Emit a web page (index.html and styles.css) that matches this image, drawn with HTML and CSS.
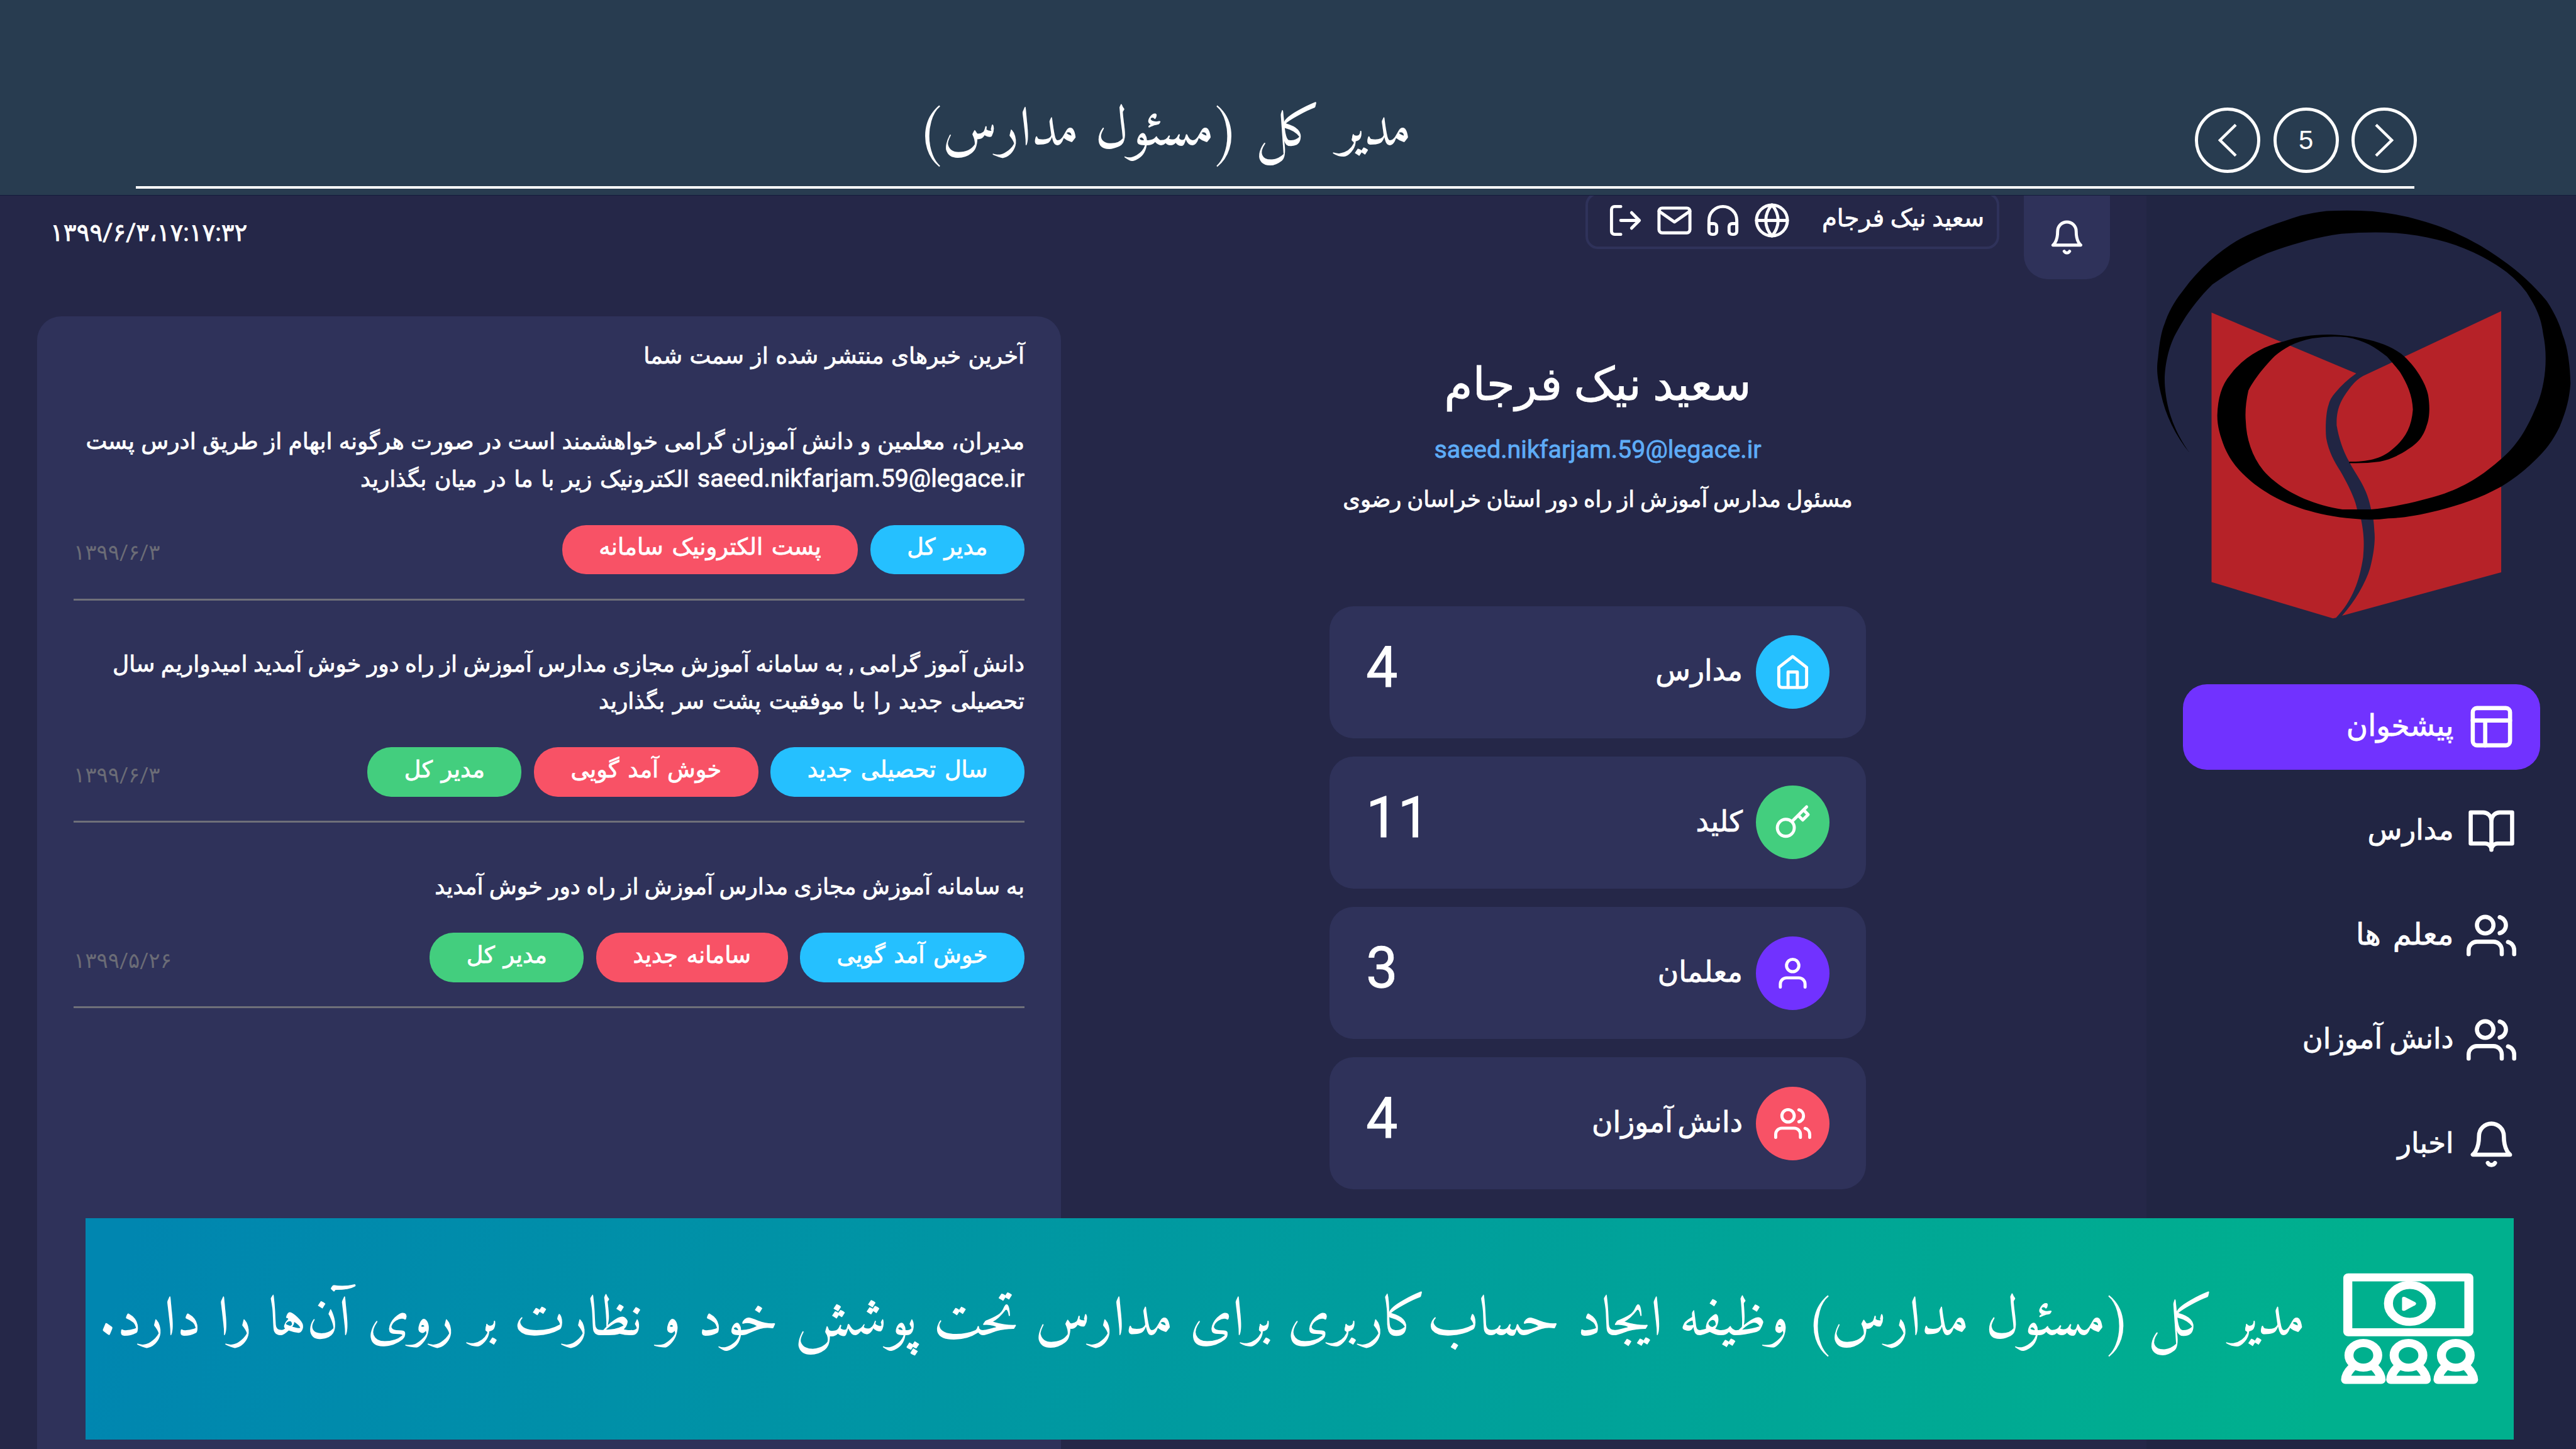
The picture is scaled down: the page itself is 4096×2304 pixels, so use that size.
FILE: index.html
```html
<!DOCTYPE html>
<html lang="fa" dir="rtl">
<head>
<meta charset="utf-8">
<title>مدیر کل (مسئول مدارس)</title>
<link rel="stylesheet" href="styles.css">
</head>
<body>
<svg class="defs" aria-hidden="true">
  <symbol id="i-layout" viewBox="0 0 24 24"><rect x="3" y="3" width="18" height="18" rx="2"/><path d="M3 9h18M9 21V9"/></symbol>
  <symbol id="i-book" viewBox="0 0 24 24"><path d="M2 3h6a4 4 0 0 1 4 4v14a3 3 0 0 0-3-3H2zM22 3h-6a4 4 0 0 0-4 4v14a3 3 0 0 1 3-3h7z"/></symbol>
  <symbol id="i-users" viewBox="0 0 24 24"><path d="M17 21v-2a4 4 0 0 0-4-4H5a4 4 0 0 0-4 4v2"/><circle cx="9" cy="7" r="4"/><path d="M23 21v-2a4 4 0 0 0-3-3.87M16 3.13a4 4 0 0 1 0 7.75"/></symbol>
  <symbol id="i-user" viewBox="0 0 24 24"><path d="M20 21v-2a4 4 0 0 0-4-4H8a4 4 0 0 0-4 4v2"/><circle cx="12" cy="7" r="4"/></symbol>
  <symbol id="i-bell" viewBox="0 0 24 24"><path d="M18 8A6 6 0 0 0 6 8c0 7-3 9-3 9h18s-3-2-3-9M13.73 21a2 2 0 0 1-3.46 0"/></symbol>
  <symbol id="i-home" viewBox="0 0 24 24"><path d="M3 9l9-7 9 7v11a2 2 0 0 1-2 2H5a2 2 0 0 1-2-2z"/><path d="M9 22V12h6v10"/></symbol>
  <symbol id="i-key" viewBox="0 0 24 24"><path d="M21 2l-2 2m-7.61 7.61a5.5 5.5 0 1 1-7.778 7.778 5.5 5.5 0 0 1 7.777-7.777zm0 0L15.5 7.5m0 0l3 3L22 7l-3-3m-3.5 3.5L19 4"/></symbol>
  <symbol id="i-globe" viewBox="0 0 24 24"><circle cx="12" cy="12" r="10"/><path d="M2 12h20M12 2a15.3 15.3 0 0 1 4 10 15.3 15.3 0 0 1-4 10 15.3 15.3 0 0 1-4-10 15.3 15.3 0 0 1 4-10z"/></symbol>
  <symbol id="i-headphones" viewBox="0 0 24 24"><path d="M3 18v-6a9 9 0 0 1 18 0v6"/><path d="M21 19a2 2 0 0 1-2 2h-1a2 2 0 0 1-2-2v-3a2 2 0 0 1 2-2h3zM3 19a2 2 0 0 0 2 2h1a2 2 0 0 0 2-2v-3a2 2 0 0 0-2-2H3z"/></symbol>
  <symbol id="i-mail" viewBox="0 0 24 24"><path d="M4 4h16c1.1 0 2 .9 2 2v12c0 1.1-.9 2-2 2H4c-1.1 0-2-.9-2-2V6c0-1.1.9-2 2-2z"/><path d="M22 6l-10 7L2 6"/></symbol>
  <symbol id="i-logout" viewBox="0 0 24 24"><path d="M9 21H5a2 2 0 0 1-2-2V5a2 2 0 0 1 2-2h4M16 17l5-5-5-5M21 12H9"/></symbol>
</svg>

<header class="header">
  <div class="header-inner">
    <nav class="pager" dir="ltr">
      <a class="pager-btn"><svg class="chevron" viewBox="0 0 30 52"><path d="M28 1.5L3 26l25 24.500"/></svg></a>
      <span class="pager-btn">5</span>
      <a class="pager-btn"><svg class="chevron" viewBox="0 0 30 52"><path d="M2 1.500L27 26 2 50.500"/></svg></a>
    </nav>
    <h1 class="title">مدیر کل (مسئول مدارس)</h1>
  </div>
</header>

<div class="app">
  <aside class="sidebar">
    <svg class="logo" viewBox="100 80 1460 1430" preserveAspectRatio="none">
      <path class="book" d="M300 445L803 655Q760 685 730 722Q712 742 707 763C697 790 695 850 699 880C707 925 728 962 748 993C775 1040 800 1090 806 1125L820 1160C832 1220 830 1250 827 1290C815 1370 790 1440 733 1499L722 1501L300 1376Z"/>
      <path class="book" d="M1307 440V1342L754 1492C800 1440 835 1380 851 1328C864 1280 870 1230 866 1200Q864 1150 853 1118C840 1050 805 1010 780 963C755 920 742 875 735 835C733 770 755 740 785 700Q805 676 827 664Z"/>
      <path class="swirl" d="M224 930C175 870 140 800 124 725C111 670 108 640 114 600C119 550 125 510 138 480C155 430 180 395 203 366C260 290 330 230 400 190C460 160 530 135 610 110Q650 100 700 94Q780 90 860 95C960 105 1030 125 1100 150C1190 185 1250 220 1310 263C1370 305 1420 350 1465 405C1495 450 1512 490 1520 520C1540 570 1546 630 1548 690C1544 740 1535 780 1510 840C1480 900 1450 930 1430 950C1390 990 1350 1020 1307 1046C1230 1088 1160 1110 1090 1128C1010 1148 960 1154 915 1156Q870 1162 820 1159C750 1155 690 1145 640 1130C550 1105 490 1068 450 1038C390 990 365 955 345 910C330 870 320 840 320 800C322 740 335 695 365 660C410 600 480 560 550 545C600 527 660 520 715 521Q755 522 800 529C870 542 920 558 960 588C1010 630 1045 690 1053 730C1060 770 1058 810 1048 835C1035 880 1010 900 985 916C950 940 920 952 885 960Q830 967 778 965L779 960C840 960 890 950 925 920C970 885 995 845 1000 780C998 730 980 690 955 650Q935 625 910 597C870 565 830 540 770 530Q710 525 650 534C590 545 550 570 520 595C470 645 440 690 428 715C420 750 416 790 419 820C421 880 440 940 480 990C540 1060 650 1110 755 1125H853C950 1115 1030 1095 1110 1070C1200 1037 1250 1000 1310 948C1370 895 1400 840 1435 755C1460 690 1470 600 1453 520C1445 460 1430 430 1395 375C1350 315 1290 275 1210 237C1130 200 1040 178 940 170Q850 165 750 173C670 183 600 205 530 227C450 253 370 300 303 348C250 400 210 455 180 510C150 560 133 640 138 700C145 790 175 860 224 930Z"/>
    </svg>
    <nav class="nav">
      <a class="nav-item active"><svg class="icon"><use href="#i-layout"/></svg><span>پیشخوان</span></a>
      <a class="nav-item"><svg class="icon"><use href="#i-book"/></svg><span>مدارس</span></a>
      <a class="nav-item teachers"><svg class="icon"><use href="#i-users"/></svg><span>معلم ها</span></a>
      <a class="nav-item"><svg class="icon"><use href="#i-users"/></svg><span>دانش آموزان</span></a>
      <a class="nav-item"><svg class="icon"><use href="#i-bell"/></svg><span>اخبار</span></a>
    </nav>
  </aside>

  <main class="main">
    <div class="topbar">
      <div class="alerts"><svg class="icon"><use href="#i-bell"/></svg></div>
      <div class="account">
        <span class="account-name">سعید نیک فرجام</span>
        <div class="account-tools">
          <svg class="icon"><use href="#i-globe"/></svg>
          <svg class="icon"><use href="#i-headphones"/></svg>
          <svg class="icon"><use href="#i-mail"/></svg>
          <svg class="icon"><use href="#i-logout"/></svg>
        </div>
      </div>
      <time class="clock" dir="ltr">۱۳۹۹/۶/۳،۱۷:۱۷:۳۲</time>
    </div>

    <div class="content">
      <section class="profile">
        <h2 class="name">سعید نیک فرجام</h2>
        <a class="email" dir="ltr">saeed.nikfarjam.59@legace.ir</a>
        <p class="role">مسئول مدارس آموزش از راه دور استان خراسان رضوی</p>
        <div class="stats">
          <div class="stat"><span class="badge blue"><svg class="icon"><use href="#i-home"/></svg></span><span class="label">مدارس</span><span class="count">4</span></div>
          <div class="stat"><span class="badge green"><svg class="icon"><use href="#i-key"/></svg></span><span class="label">کلید</span><span class="count">11</span></div>
          <div class="stat"><span class="badge purple"><svg class="icon"><use href="#i-user"/></svg></span><span class="label">معلمان</span><span class="count">3</span></div>
          <div class="stat"><span class="badge red"><svg class="icon"><use href="#i-users"/></svg></span><span class="label">دانش آموزان</span><span class="count">4</span></div>
        </div>
      </section>

      <section class="news">
        <h3 class="news-title">آخرین خبرهای منتشر شده از سمت شما</h3>
        <article class="post">
          <p><span class="line loose">مدیران، معلمین و دانش آموزان گرامی خواهشمند است در صورت هرگونه ابهام از طریق ادرس پست</span> <span class="line looser"><span class="latin">saeed.nikfarjam.59@legace.ir</span> الکترونیک زیر با ما در میان بگذارید</span></p>
          <div class="meta">
            <div class="tags"><span class="tag blue">مدیر کل</span><span class="tag red">پست الکترونیک سامانه</span></div>
            <time class="date" dir="ltr">۱۳۹۹/۶/۳</time>
          </div>
        </article>
        <article class="post">
          <p><span class="line">دانش آموز گرامی , به سامانه آموزش مجازی مدارس آموزش از راه دور خوش آمدید امیدواریم سال</span> <span class="line looser">تحصیلی جدید را با موفقیت پشت سر بگذارید</span></p>
          <div class="meta">
            <div class="tags"><span class="tag blue">سال تحصیلی جدید</span><span class="tag red">خوش آمد گویی</span><span class="tag green">مدیر کل</span></div>
            <time class="date" dir="ltr">۱۳۹۹/۶/۳</time>
          </div>
        </article>
        <article class="post">
          <p><span class="line">به سامانه آموزش مجازی مدارس آموزش از راه دور خوش آمدید</span></p>
          <div class="meta">
            <div class="tags"><span class="tag blue">خوش آمد گویی</span><span class="tag red">سامانه جدید</span><span class="tag green">مدیر کل</span></div>
            <time class="date" dir="ltr">۱۳۹۹/۵/۲۶</time>
          </div>
        </article>
      </section>
    </div>
  </main>
</div>

<div class="banner">
  <svg class="audience" viewBox="255 405 770 700" preserveAspectRatio="none">
    <rect x="297.500" y="436.500" width="673" height="341" rx="2"/>
    <ellipse cx="642.500" cy="598.500" rx="119" ry="114.500"/>
    <path class="solid" d="M599 565Q600 554 615 558L672 591Q683 600 672 609L615 643Q600 648 599 636Z"/>
    <g id="seat"><ellipse cx="384" cy="921" rx="80" ry="76.500"/><path d="M322 995Q286 1035 285 1073H483Q482 1035 446 995"/></g>
    <use href="#seat" x="251"/>
    <use href="#seat" x="514"/>
  </svg>
  <p class="caption">مدیر کل (مسئول مدارس) وظیفه ایجاد حساب‌کاربری برای مدارس تحت پوشش خود و نظارت بر روی آن‌ها را دارد.</p>
</div>
</body>
</html>
```
FILE: styles.css
```css
* { box-sizing: border-box; margin: 0; padding: 0; }

body {
  position: relative;
  width: 4096px;
  height: 2304px;
  overflow: hidden;
  background: #252748;
  color: #fff;
  font-family: Roboto, "DejaVu Sans", sans-serif;
  font-size: 36px;
  line-height: 58.6px;
  white-space: nowrap;
}

h1, h2, h3 { font-weight: 400; }

.defs { display: none; }

.icon {
  width: 59px;
  height: 59px;
  flex: none;
  fill: none;
  stroke: #fff;
  stroke-width: 2;
  stroke-linecap: round;
  stroke-linejoin: round;
}

/* Slide header */
.header {
  position: relative;
  z-index: 1;
  height: 311px;
  padding: 0 257px 0 216px;
  background: #283c50;
  border-bottom: 1px solid #141c3c;
}

.header-inner {
  display: flex;
  height: 299.5px;
  border-bottom: 4.5px solid #fff;
}

.pager {
  display: flex;
  gap: 20.3px;
  margin: 170.5px -4px 0 0;
}

.pager-btn {
  display: flex;
  align-items: center;
  justify-content: center;
  width: 104px;
  height: 104px;
  border: 5px solid #fff;
  border-radius: 50%;
  font: 42px "Liberation Sans", Arial, sans-serif;
}

.chevron {
  width: 30px;
  height: 52px;
  fill: none;
  stroke: #fff;
  stroke-width: 4.5;
}

.title {
  flex: 1;
  padding: 135px 4px 0 0;
  text-align: center;
  font: 88px/150px Amiri, "Noto Naskh Arabic", "DejaVu Sans", serif;
}

/* Application shell */
.app {
  display: flex;
  height: 1993px;
  -webkit-text-stroke: 0.8px currentColor;
}

.sidebar {
  width: 683px;
  padding-top: 17.6px;
  background: #212543;
}

.logo {
  display: block;
  width: 667.8px;
  height: 658.3px;
  margin-right: 3.7px;
}

.book { fill: #b62228; }
.swirl { fill: #000; }

.nav {
  display: flex;
  flex-direction: column;
  gap: 30px;
  margin: 101px 57px 0 58px;
}

.nav-item {
  display: flex;
  align-items: center;
  gap: 20px;
  height: 136px;
  padding-right: 38.5px;
  border-radius: 38px;
  font-size: 45px;
}

.nav-item span { padding-bottom: 4px; }
.nav-item .icon { width: 79px; height: 79px; }
.nav-item.active { background: #7132ff; font-size: 46.8px; }
.nav-item.teachers { font-size: 48px; word-spacing: 7px; }

.main { flex: 1; display: flex; flex-direction: column; }

.topbar {
  display: flex;
  align-items: flex-start;
  height: 192px;
  padding: 0 58px 0 80px;
}

.alerts {
  display: flex;
  align-items: center;
  justify-content: center;
  width: 137px;
  height: 132.6px;
  border-radius: 0 0 38px 38px;
  background: #2f325a;
}

.account {
  display: flex;
  align-items: center;
  width: 658.5px;
  height: 89.5px;
  margin: -5px 39px 0 0;
  padding-right: 20px;
  border: 4px solid #2f325a;
  border-radius: 20px;
}

.account-name { padding-bottom: 6px; font-size: 38.6px; }

.account-tools { display: flex; gap: 18.7px; margin-right: 50px; }

.clock { margin: 30px auto 0 0; font-size: 38.8px; }

.content { flex: 1; display: flex; }

.profile {
  flex: 1;
  display: flex;
  flex-direction: column;
  align-items: center;
  padding: 58px 19px 0 0;
}

.name { font-size: 73px; line-height: 100px; }

.email {
  margin-top: 24px;
  color: #5eacf7;
  font-size: 39.4px;
  line-height: 60px;
}

.role { margin-top: 18.5px; font-size: 35.4px; line-height: 60px; }

.stats {
  display: flex;
  flex-direction: column;
  gap: 28.9px;
  width: 853px;
  margin-top: 140px;
}

.stat {
  display: flex;
  align-items: center;
  height: 210.3px;
  padding: 0 58px 0 58px;
  border-radius: 38px;
  background: #2f325a;
}

.badge {
  display: flex;
  align-items: center;
  justify-content: center;
  width: 117px;
  height: 117px;
  border-radius: 50%;
}

.label {
  margin-right: 21px;
  padding-bottom: 2px;
  font-size: 45.6px;
  word-spacing: -4px;
}

.count {
  margin-right: auto;
  padding-bottom: 14px;
  font-size: 90px;
  line-height: 100px;
}

.blue { background: #25c0ff; }
.green { background: #43ce7e; }
.purple { background: #7132ff; }
.red { background: #f85266; }

/* News card */
.news {
  width: 1628px;
  margin-left: 59px;
  padding: 34.4px 58px 0;
  border-radius: 38px 38px 0 0;
  background: #2f325a;
}

.news-title { font-size: 36px; word-spacing: 2.5px; margin-bottom: 77.4px; }

.post {
  margin-bottom: 72.5px;
  padding-bottom: 38.5px;
  border-bottom: 3px solid #6f7079;
}

.line { display: block; height: 58.6px; word-spacing: 0.5px; }
.loose { word-spacing: 1.4px; }
.looser { word-spacing: 3.8px; }
.latin { font-size: 39.4px; }

.meta {
  display: flex;
  align-items: center;
  justify-content: space-between;
  margin-top: 44px;
}

.tags { display: flex; gap: 19.5px; }

.tag {
  height: 78.5px;
  padding: 6.5px 58.5px 0;
  border-radius: 38px;
  font-size: 36.7px;
  word-spacing: 4.5px;
}

.date {
  padding-top: 9px;
  color: #6b6c76;
  font-size: 34px;
  -webkit-text-stroke: 0;
}

/* Caption laid over the bottom of the application */
.banner {
  position: absolute;
  z-index: 2;
  left: 136px;
  top: 1936.6px;
  display: flex;
  align-items: center;
  width: 3861px;
  height: 352.4px;
  padding-right: 56px;
  background: linear-gradient(107deg, #0086b0 2%, #00b08e 92%);
}

.audience {
  width: 220.2px;
  height: 179.2px;
  flex: none;
  fill: none;
  stroke: #fff;
  stroke-width: 50;
  stroke-linejoin: round;
}

.audience .solid { fill: #fff; stroke: none; }

.caption {
  margin-right: 55px;
  padding-bottom: 24px;
  font: 89px/150px Amiri, "Noto Naskh Arabic", "DejaVu Sans", serif;
}
```
